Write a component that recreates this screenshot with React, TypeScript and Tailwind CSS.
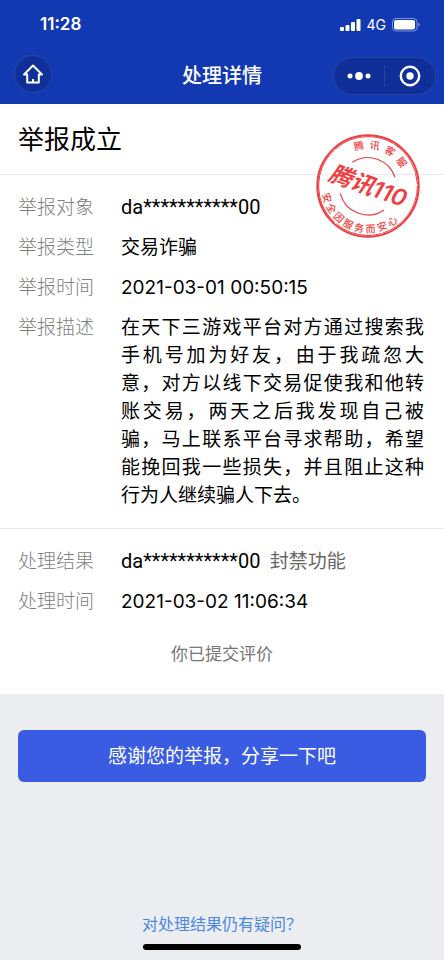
import type { ReactNode } from 'react'

const reportRows = [
  { label: '举报对象', value: <MaskedId /> },
  { label: '举报类型', value: '交易诈骗' },
  { label: '举报时间', value: '2021-03-01 00:50:15' },
]

const description =
  '在天下三游戏平台对方通过搜索我手机号加为好友，由于我疏忽大意，对方以线下交易促使我和他转账交易，两天之后我发现自己被骗，马上联系平台寻求帮助，希望能挽回我一些损失，并且阻止这种行为人继续骗人下去。'

function MaskedId() {
  return <span className="font-['Roboto',sans-serif] text-[20px] leading-5">da***********00</span>
}

function Row({ label, children }: { label: string; children: ReactNode }) {
  return (
    <div className="flex">
      <dt className="w-[103px] shrink-0 font-light text-[#808080]">{label}</dt>
      <dd className="flex-1 text-justify">{children}</dd>
    </div>
  )
}

function StatusBar() {
  return (
    <div className="flex h-[50px] items-center justify-between pr-6 pl-10">
      <span className="text-[17px] font-semibold">11:28</span>
      <div className="flex items-center gap-1.5">
        <svg width="21" height="14" viewBox="0 0 21 14" fill="currentColor" aria-hidden="true">
          <rect x="0" y="9" width="4" height="4" rx="1" />
          <rect x="5.5" y="7" width="4" height="6" rx="1" />
          <rect x="11" y="4" width="4" height="9" rx="1" />
          <rect x="16.5" y="1" width="4" height="12" rx="1" />
        </svg>
        <span className="text-sm">4G</span>
        <svg width="28" height="14" viewBox="0 0 28 14" aria-hidden="true">
          <rect x="0.5" y="0.5" width="24.5" height="12.5" rx="3.5" fill="none" stroke="currentColor" opacity="0.45" />
          <rect x="2" y="2" width="21" height="9.5" rx="2" fill="currentColor" />
          <path d="M26.3 4.8c1 .4 1.4 1.1 1.4 2s-.4 1.6-1.4 2z" fill="currentColor" opacity="0.45" />
        </svg>
      </div>
    </div>
  )
}

function NavBar() {
  return (
    <div className="grid h-[54px] grid-cols-[1fr_auto_1fr] items-center px-2 pb-0.5">
      <button
        aria-label="首页"
        className="mb-1 ml-1.5 flex size-[38px] items-center justify-center rounded-full border border-white/10 bg-[#102f98]"
      >
        <svg width="22" height="20" viewBox="0 0 22 20" fill="none" stroke="currentColor" strokeWidth="2" strokeLinejoin="round" aria-hidden="true">
          <path d="M11 1.5 2 10.5h3.2v8h11.600v-8H20z" />
          <path d="M11 15v3" />
        </svg>
      </button>
      <h1 className="text-xl font-medium">处理详情</h1>
      <div className="flex h-[38px] w-[103px] items-center justify-self-end rounded-full border border-white/10 bg-[#102f98]">
        <button aria-label="更多" className="flex flex-1 justify-center">
          <svg width="24" height="10" viewBox="0 0 24 10" fill="currentColor" aria-hidden="true">
            <circle cx="3" cy="5" r="2.5" />
            <circle cx="12" cy="5" r="3.9" />
            <circle cx="21" cy="5" r="2.5" />
          </svg>
        </button>
        <span className="h-[22px] w-px bg-white/10" />
        <button aria-label="关闭" className="flex flex-1 justify-center">
          <svg width="22" height="22" viewBox="0 0 22 22" aria-hidden="true">
            <circle cx="11" cy="11" r="9.2" fill="none" stroke="currentColor" strokeWidth="2.4" />
            <circle cx="11" cy="11" r="3.7" fill="currentColor" />
          </svg>
        </button>
      </div>
    </div>
  )
}

/* Characters set one by one round the stamp's rim */
const topChars = [...'腾讯客服'].map((char, i) => ({ char, turn: -13 + i * 22.5 }))
const bottomChars = [...'安全因服务而安心'].map((char, i) => ({ char, turn: 74 - i * 15.5 }))

function Stamp() {
  return (
    <svg
      className="absolute top-[30px] right-6 text-[#ee3f44]"
      width="104"
      height="104"
      viewBox="0 0 104 104"
      fill="currentColor"
      textAnchor="middle"
      role="img"
      aria-label="腾讯110"
    >
      <g fill="none" stroke="currentColor">
        <circle cx="52" cy="52" r="50.7" strokeWidth="2" />
        <circle cx="52" cy="52" r="49.4" strokeWidth="1" strokeDasharray="63 1 48 2 81 1" />
        <path d="M36.3 28.3A28.5 28.5 0 0 1 79 43.3" strokeWidth="1.2" />
        <path d="M24.3 59.3A28.5 28.5 0 0 0 68 76" strokeWidth="1.2" />
      </g>
      <g fontSize="10" fontWeight="500">
        {topChars.map(({ char, turn }) => (
          <text key={turn} x="52" y="14.5" transform={`rotate(${turn} 52 52)`}>{char}</text>
        ))}
        {bottomChars.map(({ char, turn }) => (
          <text key={turn} x="52" y="98.5" transform={`rotate(${turn} 52 52)`}>{char}</text>
        ))}
      </g>
      <text x="52" y="60" fontSize="23" fontWeight="600" fontStyle="italic" transform="rotate(20 52 52)">
        腾讯110
      </text>
    </svg>
  )
}

export default function App() {
  return (
    <div
      lang="zh-CN"
      className="flex min-h-screen flex-col bg-[#ecedf1] font-['Inter','Noto_Sans_CJK_SC',sans-serif] text-black"
    >
      <header className="bg-[#1239b2] text-white">
        <StatusBar />
        <NavBar />
      </header>

      <main className="relative bg-white">
        <h2 className="border-b border-[#ebebeb] px-[18px] pt-[17px] pb-[15px] text-[26px] leading-[38px]">举报成立</h2>
        <Stamp />

        <dl className="flex flex-col gap-3 border-b border-[#ebebeb] pt-[19px] pr-5 pb-[18px] pl-[18px] text-[19px] leading-7">
          {reportRows.map((row) => (
            <Row key={row.label} label={row.label}>{row.value}</Row>
          ))}
          <Row label="举报描述">{description}</Row>
        </dl>

        <dl className="flex flex-col gap-3 pt-[19px] pr-5 pl-[18px] text-[19px] leading-7">
          <Row label="处理结果">
            <MaskedId /> <span className="ml-1 text-[#666]">封禁功能</span>
          </Row>
          <Row label="处理时间">2021-03-02 11:06:34</Row>
        </dl>

        <p className="pt-6 pb-[26px] text-center text-[17px] leading-7 text-[#777]">你已提交评价</p>
      </main>

      <div className="px-[18px] pt-9">
        <button className="h-[52px] w-full rounded-md bg-[#3a5ce2] pt-0.5 text-[19px] text-white">
          感谢您的举报，分享一下吧
        </button>
      </div>

      <footer className="mt-auto flex flex-col items-center gap-2 pb-2.5">
        <a href="#" className="text-base leading-6 text-[#4a88e0]">对处理结果仍有疑问？</a>
        <div className="h-1.5 w-[158px] rounded-full bg-black" />
      </footer>
    </div>
  )
}
